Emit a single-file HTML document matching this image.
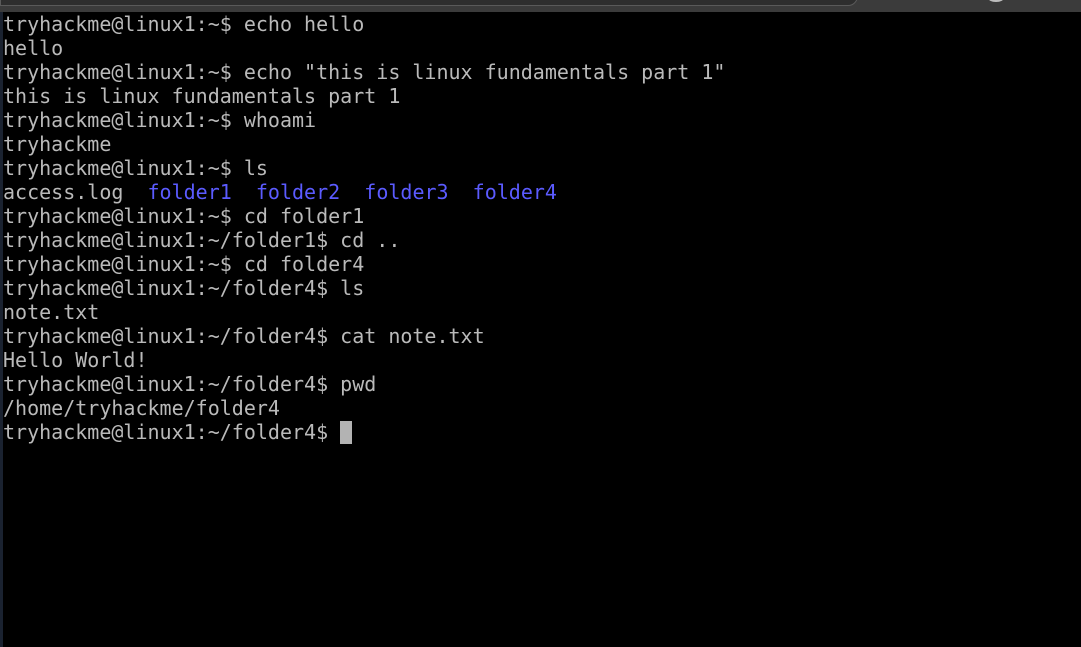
<!DOCTYPE html>
<html><head><meta charset="utf-8"><style>
html,body{margin:0;padding:0;width:1081px;height:647px;overflow:hidden;background:#000}
.top{position:absolute;left:0;top:0;width:1081px;height:12px;background:#3b3b3b}
.tab{position:absolute;left:0;top:-6px;width:856px;height:10px;background:#2e2e2e;border:1px solid #5a5a5a;border-bottom-right-radius:10px}
.dot{position:absolute;left:988px;top:-6px;width:16px;height:8px;border-radius:50%;background:#bdbdbd}
.left{position:absolute;left:0;top:12px;width:3px;height:635px;background:#1a2230}
pre{position:absolute;left:3px;top:12px;margin:0;font-family:"DejaVu Sans Mono","Liberation Mono",monospace;font-size:20px;line-height:24px;color:#bababa;letter-spacing:0}
.b{color:#5b5bff}
.cur{display:inline-block;width:12px;height:23px;background:#b3b3b3;vertical-align:-5px}
</style></head><body>
<div class="top"><div class="tab"></div><div class="dot"></div></div>
<div class="left"></div>
<pre>tryhackme@linux1:~$ echo hello
hello
tryhackme@linux1:~$ echo "this is linux fundamentals part 1"
this is linux fundamentals part 1
tryhackme@linux1:~$ whoami
tryhackme
tryhackme@linux1:~$ ls
access.log  <span class="b">folder1</span>  <span class="b">folder2</span>  <span class="b">folder3</span>  <span class="b">folder4</span>
tryhackme@linux1:~$ cd folder1
tryhackme@linux1:~/folder1$ cd ..
tryhackme@linux1:~$ cd folder4
tryhackme@linux1:~/folder4$ ls
note.txt
tryhackme@linux1:~/folder4$ cat note.txt
Hello World!
tryhackme@linux1:~/folder4$ pwd
/home/tryhackme/folder4
tryhackme@linux1:~/folder4$ <span class="cur"></span></pre>
</body></html>
